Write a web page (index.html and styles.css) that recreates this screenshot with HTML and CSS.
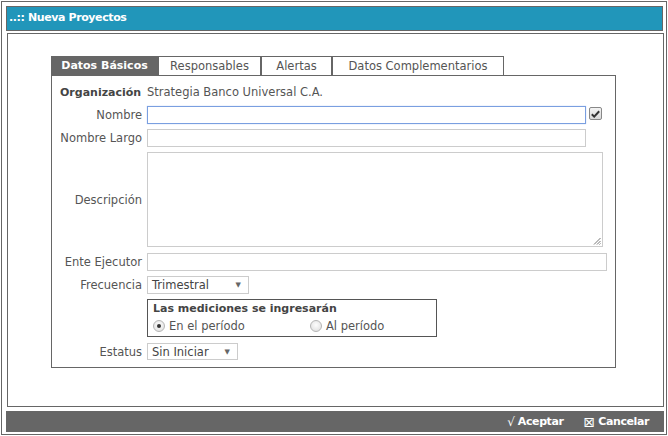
FILE: index.html
```html
<!DOCTYPE html>
<html lang="es">
<head>
<meta charset="utf-8">
<title>Nueva Proyectos</title>
<link rel="stylesheet" href="styles.css">
</head>
<body>
<div class="frame">
  <div class="titlebar">..:: Nueva Proyectos</div>
  <div class="content">
    <div class="tabs">
      <div class="tab tab-active tab-w1">Datos Básicos</div>
      <div class="tab tab-w2">Responsables</div>
      <div class="tab tab-w3">Alertas</div>
      <div class="tab tab-w4">Datos Complementarios</div>
    </div>
    <div class="panel">
      <div class="form">
        <div class="lbl lbl-strong lbl-left">Organización</div>
        <div class="val">Strategia Banco Universal C.A.</div>

        <div class="lbl">Nombre</div>
        <div class="inline">
          <div class="input input-focus input-w1"></div>
          <div class="check">
            <svg width="9" height="8" viewBox="0 0 9 8"><path d="M0.8 4.2 L3.2 6.6 L8.2 1.2" fill="none" stroke="#333" stroke-width="2"/></svg>
          </div>
        </div>

        <div class="lbl">Nombre Largo</div>
        <div class="input input-w1"></div>

        <div class="lbl">Descripción</div>
        <div class="textarea">
          <svg class="grip" width="8" height="8" viewBox="0 0 8 8"><path d="M7.5 1 L1 7.5 M7.5 4 L4 7.5 M7.5 6.5 L6.5 7.5" stroke="#777" stroke-width="1" fill="none"/></svg>
        </div>

        <div class="lbl gap1">Ente Ejecutor</div>
        <div class="input input-w3 gap1"></div>

        <div class="lbl">Frecuencia</div>
        <div class="select select-w1"><span>Trimestral</span><span class="arrow">▼</span></div>

        <div></div>
        <div class="fieldset">
          <div class="legend">Las mediciones se ingresarán</div>
          <div class="radios">
            <div class="radio-opt radio-first"><span class="radio radio-on"></span>En el período</div>
            <div class="radio-opt"><span class="radio"></span>Al período</div>
          </div>
        </div>

        <div class="lbl gap1">Estatus</div>
        <div class="select select-w2 gap1"><span>Sin Iniciar</span><span class="arrow">▼</span></div>
      </div>
    </div>
  </div>
  <div class="footer">
    <span class="btn"><span class="btn-ico">√</span> Aceptar</span>
    <span class="btn"><span class="btn-ico btn-x">⊠</span> Cancelar</span>
  </div>
</div>
</body>
</html>
```
FILE: styles.css
```css
* { box-sizing: border-box; }
html, body { margin: 0; padding: 0; background: #fff; }
body {
  font-family: "DejaVu Sans", Verdana, sans-serif;
  font-size: 11.5px;
  color: #555;
}
.frame {
  margin: 1px;
  width: 666px;
  height: 434px;
  border: 1px solid #666;
  padding: 4px 0 0 4px;
  display: flex;
  flex-direction: column;
}
.titlebar {
  width: 657px;
  height: 25px;
  border: 1px solid #666;
  background: #2196ba;
  color: #fff;
  font-weight: bold;
  font-size: 11px;
  letter-spacing: -0.4px;
  line-height: 22px;
  padding-left: 2px;
}
.content {
  margin: 2px 0 0 1px;
  width: 657px;
  height: 374px;
  border: 1px solid #666;
  padding: 22px 0 0 43px;
}
.tabs { display: flex; height: 19px; }
.tab {
  height: 19px;
  border: 1px solid #666;
  border-bottom: none;
  text-align: center;
  line-height: 18px;
  color: #555;
}
.tab-active { background: #666; color: #fff; font-weight: bold; font-size: 11px; }
.tab-w1 { width: 107px; }
.tab-w2 { width: 103px; }
.tab-w3 { width: 71px; }
.tab-w4 { width: 172px; }
.panel {
  width: 565px;
  height: 293px;
  border: 1px solid #666;
  padding: 7px 0 0 8px;
}
.form {
  display: grid;
  grid-template-columns: 82px auto;
  column-gap: 5px;
  row-gap: 5px;
  align-items: center;
  justify-items: start;
}
.lbl { justify-self: end; text-align: right; white-space: nowrap; }
.lbl-left { justify-self: start; }
.lbl-strong { font-weight: bold; color: #444; font-size: 11px; }
.val { height: 18px; line-height: 18px; }
.gap1 { margin-top: 1px; }
.inline { display: flex; align-items: flex-start; gap: 3px; }
.input {
  height: 18px;
  border: 1px solid #ccc;
  background: #fff;
}
.input-focus { border-color: #7a9fe0; box-shadow: 0 0 1px #a9c3f0; }
.input-w1 { width: 439px; }
.input-w3 { width: 460px; }
.check {
  margin-top: 1px;
  width: 13px;
  height: 13px;
  border: 1px solid #888;
  border-radius: 2px;
  background: linear-gradient(#f4f4f4, #d8d8d8);
  display: flex;
  align-items: center;
  justify-content: center;
}
.textarea {
  position: relative;
  width: 456px;
  height: 95px;
  border: 1px solid #ccc;
}
.grip { position: absolute; right: 1px; bottom: 1px; }
.select {
  height: 18px;
  border: 1px solid #ccc;
  display: flex;
  align-items: center;
  justify-content: space-between;
  padding: 0 7px 0 4px;
  color: #444;
}
.select-w1 { width: 102px; }
.select-w2 { width: 91px; height: 17px; }
.arrow { font-size: 7px; color: #666; }
.fieldset {
  width: 290px;
  height: 38px;
  border: 1px solid #555;
  padding: 1px 0 0 5px;
}
.legend { font-weight: bold; color: #444; font-size: 11px; line-height: 16px; }
.radios { display: flex; align-items: center; height: 18px; }
.radio-opt { display: flex; align-items: center; gap: 4px; color: #555; }
.radio-first { width: 157px; }
.radio {
  width: 12px;
  height: 12px;
  border-radius: 50%;
  border: 1px solid #b5b5b5;
  background: radial-gradient(circle at 50% 40%, #fdfdfd, #dcdcdc);
  display: inline-flex;
  align-items: center;
  justify-content: center;
}
.radio-on::after {
  content: "";
  width: 4px;
  height: 4px;
  border-radius: 50%;
  background: #333;
}
.footer {
  margin-top: 4px;
  width: 658px;
  height: 21px;
  background: #666;
  display: flex;
  justify-content: flex-end;
  align-items: center;
  gap: 20px;
  padding-right: 15px;
}
.btn { color: #fff; font-weight: bold; font-size: 11px; letter-spacing: -0.4px; white-space: nowrap; display: flex; align-items: center; gap: 3px; }
.btn-ico { font-weight: normal; font-size: 12px; letter-spacing: 0; }
.btn-x { font-size: 14px; }
```
